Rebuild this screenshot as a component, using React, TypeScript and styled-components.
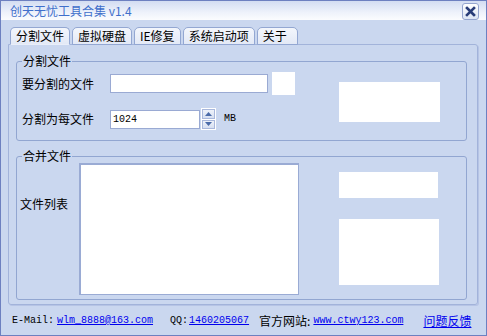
import React from "react";
import styled, { createGlobalStyle } from "styled-components";

const Global = createGlobalStyle`
  html, body { margin: 0; padding: 0; background: #cad7ef; }
  * { box-sizing: border-box; }
`;

const cjk = `"Noto Sans CJK SC", "Noto Sans", sans-serif`;
const mono = `"Liberation Mono", "DejaVu Sans Mono", monospace`;

const Window = styled.div`
  width: 487px;
  height: 336px;
  border: 1px solid #6d80c0;
  background: #cad7ef;
  display: flex;
  flex-direction: column;
  font-family: ${cjk};
  font-size: 12px;
  line-height: 14px;
  color: #000;
`;

const TitleBar = styled.div`
  height: 19px;
  flex: none;
  display: flex;
  align-items: center;
  padding-left: 9px;
  padding-right: 7px;
  background: linear-gradient(#d3ddf2, #eef2fb 60%, #fbfcfe);
`;

const Title = styled.span`
  color: #3f6fcb;
  font-size: 12px;
  flex: 1;
`;

const CloseButton = styled.div`
  width: 17px;
  height: 17px;
  margin-top: 1px;
  border: 1px solid #95a5cf;
  border-radius: 3px;
  background: linear-gradient(#ffffff, #dce4f4);
  display: flex;
  align-items: center;
  justify-content: center;
`;

const Content = styled.div`
  flex: 1;
  padding: 7px 9px 0 7px;
  display: flex;
  flex-direction: column;
`;

const TabRow = styled.div`
  display: flex;
  gap: 2px;
  margin-left: 2px;
  height: 18px;
  margin-bottom: -1px;
  position: relative;
  z-index: 1;
`;

const Tab = styled.div<{ $active?: boolean; $pr?: number }>`
  height: 18px;
  padding: 0 ${(p) => p.$pr ?? 5}px 0 5px;
  border: 1px solid #93a7d2;
  border-bottom: 1px solid ${(p) => (p.$active ? "#e9eef9" : "#93a7d2")};
  border-radius: 5px 5px 0 0;
  background: linear-gradient(#f3f6fc, #e3e9f6);
  display: flex;
  align-items: center;
  white-space: nowrap;
`;

const Panel = styled.div`
  width: 470px;
  height: 261px;
  border: 1px solid #a2b3da;
  border-radius: 0 3px 3px 3px;
  box-shadow: 1px 1px 0 #b6c4e5;
  padding: 16px 10px 0 7px;
  display: flex;
  flex-direction: column;
  gap: 15px;
`;

const Group = styled.div<{ $h: number }>`
  position: relative;
  width: 451px;
  height: ${(p) => p.$h}px;
  border: 1px solid #92a6d1;
  border-radius: 3px;
  display: flex;
`;

const Legend = styled.span`
  position: absolute;
  top: -8px;
  left: 5px;
  padding: 0 1px;
  background: #cad7ef;
`;

const FormCol = styled.div`
  display: flex;
  flex-direction: column;
  gap: 13px;
  padding: 10px 0 0 5px;
`;

const FieldRow = styled.div<{ $h: number }>`
  display: flex;
  align-items: center;
  height: ${(p) => p.$h}px;
`;

const Label = styled.span<{ $w: number }>`
  width: ${(p) => p.$w}px;
  flex: none;
`;

const TextInput = styled.div<{ $w: number }>`
  width: ${(p) => p.$w}px;
  height: 19px;
  background: #fff;
  border: 1px solid #9aaad3;
  font-family: ${mono};
  font-size: 10px;
  line-height: 17px;
  padding-left: 2px;
`;

const WhiteBox = styled.div<{ $w: number; $h: number; $ml?: number; $mt?: number }>`
  width: ${(p) => p.$w}px;
  height: ${(p) => p.$h}px;
  margin-left: ${(p) => p.$ml ?? 0}px;
  margin-top: ${(p) => p.$mt ?? 0}px;
  background: #fff;
  flex: none;
`;

const Spin = styled.div`
  width: 15px;
  height: 22px;
  margin-left: 1px;
  display: flex;
  flex-direction: column;
  gap: 1px;
  background: #fff;
  padding: 1px;
`;

const SpinHalf = styled.div`
  flex: 1;
  background: linear-gradient(#eef2fa, #d6dff1);
  border: 1px solid #a9b8dc;
  display: flex;
  align-items: center;
  justify-content: center;
`;

const Unit = styled.span`
  font-family: ${mono};
  font-size: 10px;
  margin-left: 8px;
`;

const RightCol1 = styled.div`
  margin-left: auto;
  margin-right: 26px;
  padding-top: 20px;
`;

const MergeBody = styled.div`
  display: flex;
  padding-top: 6px;
  padding-left: 3px;
`;

const MergeLabel = styled.span`
  width: 59px;
  margin-top: 34px;
  flex: none;
`;

const ListBox = styled.div`
  width: 220px;
  height: 132px;
  background: #fff;
  border: 2px solid #9aabd4;
  border-right-width: 1px;
  border-bottom-width: 1px;
  flex: none;
`;

const RightCol2 = styled.div`
  display: flex;
  flex-direction: column;
  margin-left: 40px;
  padding-top: 9px;
  gap: 21px;
`;

const Footer = styled.div`
  display: flex;
  align-items: center;
  height: 28px;
  padding-left: 4px;
  padding-top: 3px;
`;

const Item = styled.span<{ $ml?: number; $mono?: boolean; $link?: boolean }>`
  margin-left: ${(p) => p.$ml ?? 0}px;
  font-family: ${(p) => (p.$mono ? mono : cjk)};
  font-size: ${(p) => (p.$mono ? "10px" : "12px")};
  color: ${(p) => (p.$link ? "#0000ee" : "#000")};
  text-decoration: ${(p) => (p.$link ? "underline" : "none")};
  white-space: pre;
`;

const Arrow = ({ up }: { up?: boolean }) => (
  <svg width="7" height="4" viewBox="0 0 7 4">
    <path d={up ? "M0 4 L3.5 0 L7 4 Z" : "M0 0 L3.5 4 L7 0 Z"} fill="#4a6aa8" />
  </svg>
);

export default function App() {
  return (
    <>
      <Global />
      <Window>
        <TitleBar>
          <Title>创天无忧工具合集 v1.4</Title>
          <CloseButton>
            <svg width="11" height="11" viewBox="0 0 11 11">
              <path d="M2 2 L9 9 M9 2 L2 9" stroke="#283c78" strokeWidth="2.6" strokeLinecap="square" />
            </svg>
          </CloseButton>
        </TitleBar>
        <Content>
          <TabRow>
            <Tab $active>分割文件</Tab>
            <Tab>虚拟硬盘</Tab>
            <Tab>IE修复</Tab>
            <Tab>系统启动项</Tab>
            <Tab $pr={10}>关于</Tab>
          </TabRow>
          <Panel>
            <Group $h={80}>
              <Legend>分割文件</Legend>
              <FormCol>
                <FieldRow $h={23}>
                  <Label $w={88}>要分割的文件</Label>
                  <TextInput $w={158} />
                  <WhiteBox $w={23} $h={23} $ml={4} />
                </FieldRow>
                <FieldRow $h={22}>
                  <Label $w={88}>分割为每文件</Label>
                  <TextInput $w={90}>1024</TextInput>
                  <Spin>
                    <SpinHalf>
                      <Arrow up />
                    </SpinHalf>
                    <SpinHalf>
                      <Arrow />
                    </SpinHalf>
                  </Spin>
                  <Unit>MB</Unit>
                </FieldRow>
              </FormCol>
              <RightCol1>
                <WhiteBox $w={101} $h={40} />
              </RightCol1>
            </Group>
            <Group $h={144}>
              <Legend>合并文件</Legend>
              <MergeBody>
                <MergeLabel>文件列表</MergeLabel>
                <ListBox />
                <RightCol2>
                  <WhiteBox $w={99} $h={26} />
                  <WhiteBox $w={100} $h={66} />
                </RightCol2>
              </MergeBody>
            </Group>
          </Panel>
          <Footer>
            <Item $mono>E-Mail:</Item>
            <Item $mono $link $ml={3}>wlm_8888@163.com</Item>
            <Item $mono $ml={17}>QQ:</Item>
            <Item $mono $link $ml={1}>1460205067</Item>
            <Item $ml={10}>官方网站:</Item>
            <Item $mono $link $ml={3}>www.ctwy123.com</Item>
            <Item $link $ml={20}>问题反馈</Item>
          </Footer>
        </Content>
      </Window>
    </>
  );
}
